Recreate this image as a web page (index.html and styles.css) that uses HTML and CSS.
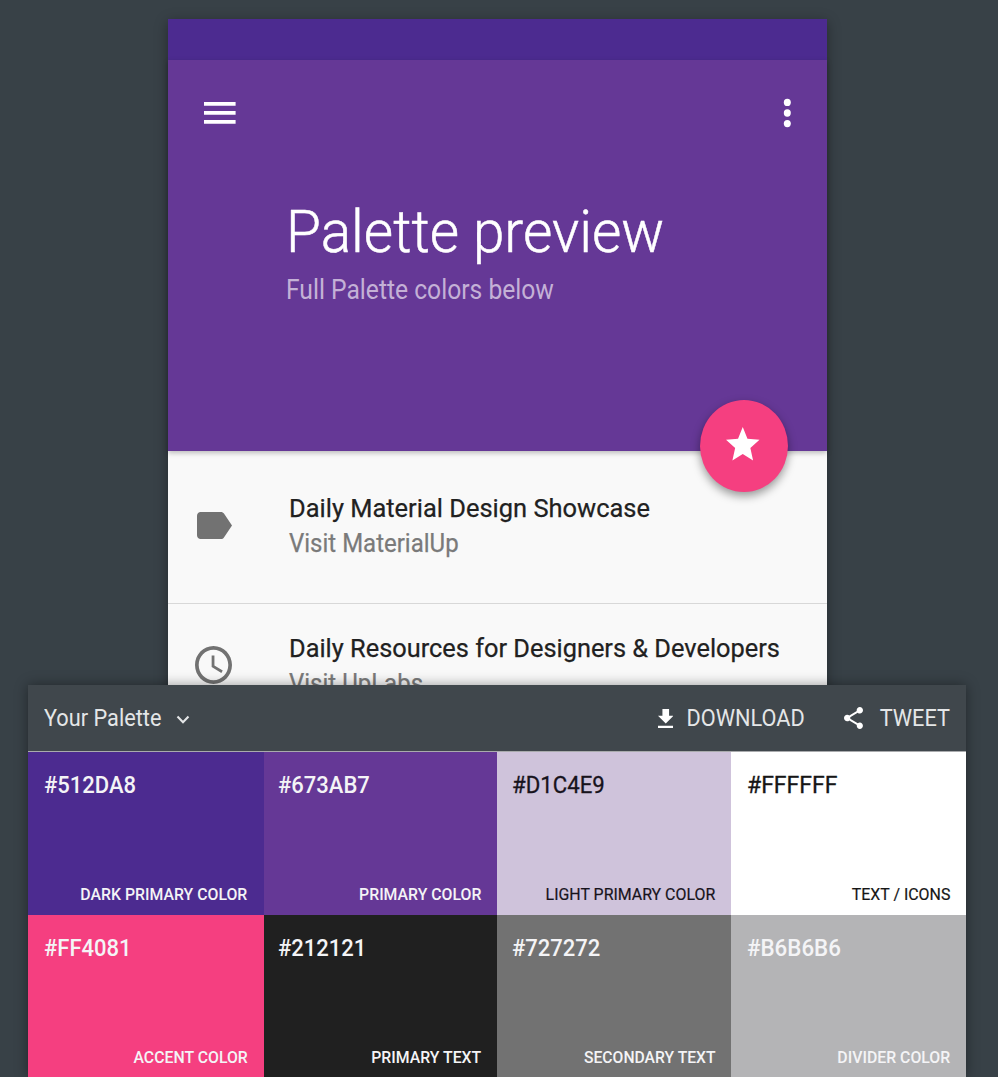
FILE: index.html
```html
<!DOCTYPE html>
<html lang="en">
<head>
<meta charset="utf-8">
<title>Palette preview</title>
<link rel="stylesheet" href="styles.css">
</head>
<body>
<main class="phone">
  <div class="statusbar"></div>
  <header class="hero">
    <div class="appbar">
      <svg class="menu" viewBox="0 0 32 24"><path fill="#fff" d="M0 1h31.6v3.8H0zM0 10h31.6v3.8H0zM0 19h31.6v3.8H0z"/></svg>
      <svg class="more" viewBox="0 0 8 30"><g fill="#fff"><ellipse cx="4.3" cy="4.4" rx="3.5" ry="3.7"/><ellipse cx="4.3" cy="15" rx="3.5" ry="3.7"/><ellipse cx="4.3" cy="25.6" rx="3.5" ry="3.7"/></g></svg>
    </div>
    <h1 class="title"><span class="fit">Palette preview</span></h1>
    <p class="subtitle"><span class="fit">Full Palette colors below</span></p>
    <div class="fab">
      <svg class="star" viewBox="2 2 20 19" preserveAspectRatio="none"><path fill="#fff" d="M12 17.27 18.18 21l-1.64-7.03L22 9.24l-7.19-.61L12 2 9.19 8.63 2 9.24l5.46 4.73L5.82 21z"/></svg>
    </div>
  </header>
  <section class="list">
    <article class="item">
      <svg class="label-icon" viewBox="3 5 19 14" preserveAspectRatio="none"><path fill="#727272" d="M17.63 5.84C17.27 5.33 16.67 5 16 5L5 5.01C3.9 5.01 3 5.9 3 7v10c0 1.1.9 1.99 2 1.99L16 19c.67 0 1.27-.33 1.63-.84L22 12l-4.37-6.16z"/></svg>
      <div>
        <h2 class="item-title"><span class="fit">Daily Material Design Showcase</span></h2>
        <p class="item-sub"><span class="fit">Visit MaterialUp</span></p>
      </div>
    </article>
    <article class="item">
      <svg class="clock-icon" viewBox="2 2 20 20" preserveAspectRatio="none"><path fill="#727272" d="M11.99 2C6.47 2 2 6.48 2 12s4.47 10 9.99 10C17.52 22 22 17.52 22 12S17.52 2 11.99 2zM12 20c-4.42 0-8-3.58-8-8s3.58-8 8-8 8 3.58 8 8-3.58 8-8 8zm.5-13H11v6l5.25 3.15.75-1.23-4.5-2.67z"/></svg>
      <div>
        <h2 class="item-title"><span class="fit">Daily Resources for Designers &amp; Developers</span></h2>
        <p class="item-sub"><span class="fit">Visit UpLabs</span></p>
      </div>
    </article>
  </section>
</main>
<section class="palette">
  <div class="toolbar">
    <span class="fit">Your Palette</span>
    <svg class="chevron" viewBox="0 0 14 10"><path d="M1.5 1.5 7 7.2l5.5-5.7" fill="none" stroke="#e4e6e7" stroke-width="2.1"/></svg>
    <span class="action download">
      <svg class="dl-icon" viewBox="5 3 14 17" preserveAspectRatio="none"><path fill="#fff" d="M19 9h-4V3H9v6H5l7 7 7-7zM5 18v2h14v-2H5z"/></svg>
      <span class="fit">DOWNLOAD</span>
    </span>
    <span class="action tweet">
      <svg class="share-icon" viewBox="3 2 18 20" preserveAspectRatio="none"><path fill="#fff" d="M18 16.08c-.76 0-1.44.3-1.96.77L8.91 12.7c.05-.23.09-.46.09-.7s-.04-.47-.09-.7l7.05-4.11c.54.5 1.25.81 2.04.81 1.66 0 3-1.34 3-3s-1.34-3-3-3-3 1.34-3 3c0 .24.04.47.09.7L8.04 9.81C7.5 9.31 6.79 9 6 9c-1.66 0-3 1.34-3 3s1.34 3 3 3c.79 0 1.5-.31 2.04-.81l7.12 4.16c-.05.21-.08.43-.08.65 0 1.61 1.31 2.92 2.92 2.92s2.92-1.31 2.92-2.92-1.31-2.92-2.92-2.92z"/></svg>
      <span class="fit">TWEET</span>
    </span>
  </div>
  <div class="swatches">
    <div class="swatch dark"><span class="hex">#512DA8</span><span class="name">DARK PRIMARY COLOR</span></div>
    <div class="swatch primary"><span class="hex">#673AB7</span><span class="name">PRIMARY COLOR</span></div>
    <div class="swatch light"><span class="hex">#D1C4E9</span><span class="name">LIGHT PRIMARY COLOR</span></div>
    <div class="swatch white"><span class="hex">#FFFFFF</span><span class="name">TEXT / ICONS</span></div>
    <div class="swatch accent"><span class="hex">#FF4081</span><span class="name">ACCENT COLOR</span></div>
    <div class="swatch text1"><span class="hex">#212121</span><span class="name">PRIMARY TEXT</span></div>
    <div class="swatch text2"><span class="hex">#727272</span><span class="name">SECONDARY TEXT</span></div>
    <div class="swatch divider"><span class="hex">#B6B6B6</span><span class="name">DIVIDER COLOR</span></div>
  </div>
</section>
</body>
</html>
```
FILE: styles.css
```css
* { box-sizing: border-box; margin: 0; padding: 0; }
body {
  height: 1077px;
  overflow: hidden;
  padding-top: 19px;
  background: #384147;
  font-family: Roboto, "Liberation Sans", sans-serif;
}
svg { display: block; flex: none; }
.fit { display: inline-block; white-space: nowrap; transform: scaleX(.96); transform-origin: 0 50%; }

.phone {
  width: 659px;
  height: 680px;
  margin-left: 167.5px;
  background: #f9f9f9;
  box-shadow: 0 3px 12px rgba(0, 0, 0, .36);
}
.statusbar { height: 41px; background: #4c2b90; }
.hero {
  position: relative;
  height: 391px;
  padding-left: 118px;
  background: #653896;
  box-shadow: 0 2px 5px rgba(0, 0, 0, .25);
}
.appbar {
  display: flex;
  justify-content: space-between;
  align-items: center;
  height: 106px;
  margin-left: -82px;
  padding-right: 35.5px;
}
.menu { width: 32px; height: 24px; }
.more { width: 8px; height: 30px; }
.title { margin-top: 31px; font-size: 60px; line-height: 70px; font-weight: 300; color: #fff; -webkit-text-stroke: .5px #fff; }
.title .fit { transform: scaleX(.946); }
.subtitle { margin-top: 3px; font-size: 27.5px; line-height: 40px; color: #c4b1d6; }
.subtitle .fit { transform: scaleX(.896); }
.fab {
  position: absolute;
  right: 39px;
  bottom: -41px;
  display: flex;
  justify-content: center;
  align-items: center;
  width: 88px;
  height: 92px;
  border-radius: 50%;
  background: #f53f80;
  box-shadow: 0 4px 10px rgba(0, 0, 0, .4);
}
.star { width: 33.5px; height: 33.5px; margin: -4px 1px 0 0; }

.item { display: flex; height: 153px; padding-top: 39px; border-bottom: 1px solid #d8d8d8; }
.item + .item { padding-top: 26px; border: 0; }
.label-icon { width: 35px; height: 27px; margin: 22px 57.5px 0 29px; }
.clock-icon { width: 37px; height: 38px; margin: 16px 57.5px 0 27px; }
.item-title { font-size: 26.5px; line-height: 36px; font-weight: 400; color: #212121; -webkit-text-stroke: .25px #212121; }
.item + .item .item-title .fit { transform: scaleX(.957); }
.item-sub { padding-top: 1px; font-size: 25px; line-height: 34px; color: #7a7a7a; -webkit-text-stroke: .25px #7a7a7a; }

.palette {
  position: absolute;
  left: 28px;
  top: 685px;
  width: 938px;
  height: 392px;
  box-shadow: 0 0 12px rgba(0, 0, 0, .4);
}
.toolbar {
  display: flex;
  align-items: center;
  height: 67px;
  padding: 0 16px;
  background: #40474c;
  border-bottom: 1px solid #a9abad;
  color: #e4e6e7;
  font-size: 23.5px;
}
.toolbar .fit { transform: scaleX(.925); }
.toolbar .action .fit { transform-origin: 100% 50%; }
.chevron { width: 14px; height: 10px; margin: 3px 0 0 4.5px; }
.action { display: flex; align-items: center; }
.download { margin-left: auto; }
.dl-icon { width: 15.5px; height: 19px; margin-right: 4px; }
.tweet { margin-left: 39px; }
.share-icon { width: 19px; height: 22px; margin-right: 11px; }

.swatches {
  display: grid;
  grid-template-columns: 235.6px 233.4px 234px 235px;
  grid-template-rows: 163px 162px;
  overflow: hidden;
}
.swatch {
  display: flex;
  flex-direction: column;
  justify-content: space-between;
  height: 163px;
  padding: 18.6px 15.6px 9px 15.5px;
  color: #f4f4f6;
}
.hex { align-self: flex-start; font-size: 23px; line-height: 30px; font-weight: 500; transform: scaleX(.957); transform-origin: 0 50%; }
.name { align-self: flex-end; font-size: 17px; line-height: 24px; font-weight: 500; white-space: nowrap; transform: scaleX(.931); transform-origin: 100% 50%; }
.dark, .accent { padding-right: 16.2px; }
.dark { background: #4c2b90; }
.primary { background: #653896; padding-left: 14.5px; }
.light { background: #cfc3db; color: #17131c; }
.white { background: #fff; color: #161616; padding-left: 16px; }
.light .hex, .white .hex { font-weight: 400; transform: scaleX(.965); -webkit-text-stroke: .3px; }
.white .hex { transform: scaleX(1); }
.light .name, .white .name { font-weight: 400; transform: scaleX(.936); -webkit-text-stroke: .2px; }
.accent { background: #f53f80; }
.text1 { background: #202020; padding-left: 14.5px; }
.text2 { background: #727272; }
.text2 .name { transform: scaleX(.923); }
.divider { background: #b4b4b6; padding-left: 16px; }
.divider .hex { transform: scaleX(.972); }
```
